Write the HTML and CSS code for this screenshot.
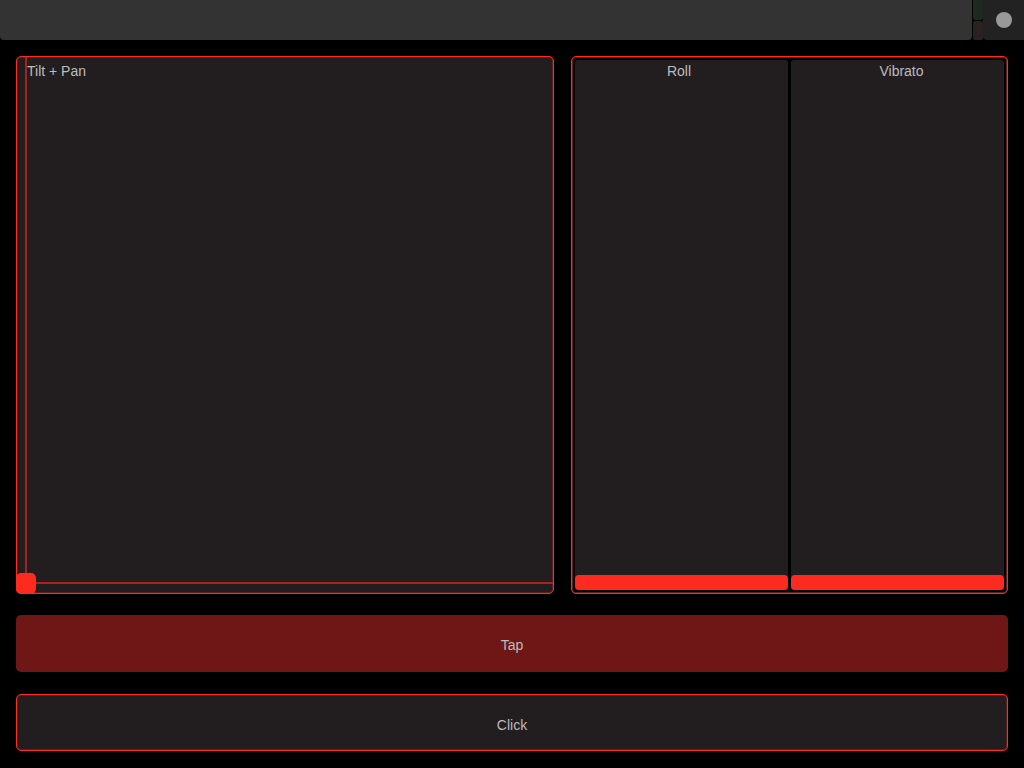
FILE: index.html
```html
<!DOCTYPE html>
<html>
<head>
<meta charset="utf-8">
<link rel="stylesheet" href="styles.css">
</head>
<body>
<div class="topbar">
  <div class="title-bar"></div>
  <div class="strip">
    <div class="strip-top"></div>
    <div class="strip-bottom"></div>
  </div>
  <div class="dot-btn"><span class="dot"></span></div>
</div>
<div class="content">
  <div class="row">
    <div class="panel xy">
      <div class="xy-label">Tilt + Pan</div>
      <div class="vline"></div>
      <div class="hline"></div>
      <div class="handle"></div>
    </div>
    <div class="panel group">
      <div class="fader roll">
        <div class="fader-label">Roll</div>
        <div class="fader-bar"></div>
      </div>
      <div class="fader vibrato">
        <div class="fader-label">Vibrato</div>
        <div class="fader-bar"></div>
      </div>
    </div>
  </div>
  <div class="btn tap">Tap</div>
  <div class="btn click">Click</div>
</div>
</body>
</html>
```
FILE: styles.css
```css
html, body {
  margin: 0;
  padding: 0;
  background: #000;
  font-family: "Liberation Sans", Arial, sans-serif;
  font-size: 14px;
  color: #bcbcbc;
}
.topbar {
  display: flex;
  height: 40px;
}
.title-bar {
  flex: 1;
  background: #333333;
  border-radius: 0 0 4px 4px;
}
.strip {
  width: 10px;
  margin-left: 1px;
  display: flex;
  flex-direction: column;
  gap: 1px;
}
.strip-top {
  flex: 1;
  background: #1e2a21;
  border-radius: 0 0 2px 2px;
}
.strip-bottom {
  flex: 1;
  background: #2a2121;
  border-radius: 2px;
}
.dot-btn {
  width: 41px;
  background: #222222;
  border-radius: 0 0 0 4px;
  display: flex;
  align-items: center;
  justify-content: center;
}
.dot {
  width: 16px;
  height: 16px;
  border-radius: 50%;
  background: #999999;
}
.content {
  padding: 16px 16px 0 16px;
}
.row {
  display: flex;
  gap: 17px;
  height: 538px;
}
.panel {
  box-sizing: border-box;
  border: 1px solid #ff2b20;
  box-shadow: inset 0 0 0 1px #6a1b18;
  border-radius: 5px;
  height: 538px;
}
.xy {
  width: 538px;
  background: #221e1f;
  position: relative;
}
.xy-label {
  position: absolute;
  left: 10px;
  top: 6px;
  line-height: 17px;
}
.vline {
  position: absolute;
  left: 8px;
  top: 0;
  bottom: 0;
  width: 2px;
  background: #a8221d;
}
.hline {
  position: absolute;
  left: 0;
  right: 0;
  top: 525px;
  height: 2px;
  background: #a8221d;
}
.handle {
  position: absolute;
  left: -1px;
  top: 516px;
  width: 20px;
  height: 21px;
  border-radius: 5px;
  background: #ff2a1f;
}
.group {
  width: 437px;
  padding: 3px;
  display: flex;
  gap: 3px;
  background: #000;
}
.fader {
  flex: 1;
  background: #221e1f;
  border-radius: 3px;
  display: flex;
  flex-direction: column;
}
.fader-label {
  text-align: center;
  padding-top: 3px;
  line-height: 17px;
  flex: 1;
}
.roll .fader-label {
  padding-right: 5px;
}
.vibrato .fader-label {
  padding-left: 8px;
}
.fader-bar {
  height: 15px;
  background: #fc2a1f;
  border-radius: 4px;
}
.btn {
  box-sizing: border-box;
  height: 57px;
  border-radius: 5px;
  display: flex;
  align-items: center;
  justify-content: center;
}
.tap {
  margin-top: 21px;
  background: #6e1716;
  padding-top: 2px;
}
.click {
  margin-top: 22px;
  background: #221e1f;
  border: 1px solid #ff2b20;
  box-shadow: inset 0 0 0 1px #6a1b18;
  padding-top: 4px;
}
```
